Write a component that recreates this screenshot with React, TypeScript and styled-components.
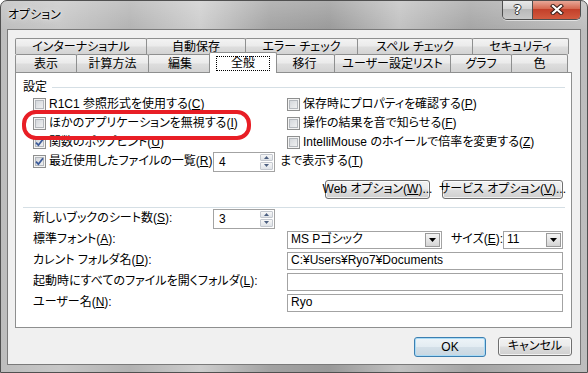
import styled, { createGlobalStyle, css } from "styled-components";

const GlobalStyle = createGlobalStyle`
  html, body {
    margin: 0;
    padding: 0;
    background: #ffffff;
  }
  body {
    font-family: "Liberation Sans", "Noto Sans CJK JP", sans-serif;
    font-size: 12px;
    line-height: 15px;
    color: #000;
    font-feature-settings: "palt" 1;
  }
`;

const backTabs = [
  { label: "インターナショナル", w: 131 },
  { label: "自動保存", w: 99 },
  { label: "エラー チェック", w: 112 },
  { label: "スペル チェック", w: 115 },
  { label: "セキュリティ", w: 96 },
];

const frontTabs = [
  { label: "表示", w: 61 },
  { label: "計算方法", w: 72 },
  { label: "編集", w: 63 },
  { label: "全般", w: 64, active: true },
  { label: "移行", w: 60 },
  { label: "ユーザー設定リスト", w: 116 },
  { label: "グラフ", w: 61 },
  { label: "色", w: 56 },
];

function Acc({ text, k, tail = "" }: { text: string; k: string; tail?: string }) {
  return (
    <>
      {text}(<Key>{k}</Key>){tail}
    </>
  );
}

function Check({ on, children }: { on?: boolean; children: React.ReactNode }) {
  return (
    <CheckRow>
      <CheckBox>
        {on ? (
          <svg width="9" height="9" viewBox="0 0 9 9">
            <polyline points="1,4.6 3.4,7.2 8,1.2" fill="none" stroke="#3b5a99" strokeWidth="1.8" />
          </svg>
        ) : null}
      </CheckBox>
      <span>{children}</span>
    </CheckRow>
  );
}

function SpinBox({ value }: { value: string }) {
  return (
    <Spin>
      <SpinValue>{value}</SpinValue>
      <SpinButtons>
        <SpinHalf>
          <svg width="5" height="3" viewBox="0 0 5 3">
            <polygon points="0,3 2.5,0 5,3" fill="#4c5f80" />
          </svg>
        </SpinHalf>
        <SpinHalf>
          <svg width="5" height="3" viewBox="0 0 5 3">
            <polygon points="0,0 2.5,3 5,0" fill="#4c5f80" />
          </svg>
        </SpinHalf>
      </SpinButtons>
    </Spin>
  );
}

function Combo({ value, width }: { value: string; width: number }) {
  return (
    <ComboBox $w={width}>
      <FieldText>{value}</FieldText>
      <ComboArrow>
        <svg width="7" height="4" viewBox="0 0 7 4">
          <polygon points="0,0 7,0 3.5,4" fill="#000" />
        </svg>
      </ComboArrow>
    </ComboBox>
  );
}

export default function App() {
  return (
    <>
      <GlobalStyle />
      <Window>
        <TitleBar>
          <Title>オプション</Title>
          <Controls>
            <HelpButton>?</HelpButton>
            <CloseButton>
              <svg width="14" height="11" viewBox="0 0 14 11">
                <path d="M3 2 L11 9 M11 2 L3 9" stroke="#3a1e18" strokeWidth="4.2" strokeLinecap="square" />
                <path d="M3 2 L11 9 M11 2 L3 9" stroke="#ffffff" strokeWidth="2.2" strokeLinecap="square" />
              </svg>
            </CloseButton>
          </Controls>
        </TitleBar>

        <Client>
          <Tabs>
            <TabRow $h={16}>
              {backTabs.map((t) => (
                <Tab key={t.label} $w={t.w}>
                  {t.label}
                </Tab>
              ))}
            </TabRow>
            <TabRow $h={18}>
              {frontTabs.map((t) => (
                <Tab key={t.label} $w={t.w} $active={t.active}>
                  {t.active ? <Focus>{t.label}</Focus> : t.label}
                </Tab>
              ))}
            </TabRow>
          </Tabs>

          <Panel>
            <GroupHead>
              <span>設定</span>
              <Rule />
            </GroupHead>

            <CheckGrid>
              <Check>
                <Acc text="R1C1 参照形式を使用する" k="C" />
              </Check>
              <Check>
                <Acc text="保存時にプロパティを確認する" k="P" />
              </Check>
              <Check>
                <Acc text="ほかのアプリケーションを無視する" k="I" />
              </Check>
              <Check>
                <Acc text="操作の結果を音で知らせる" k="F" />
              </Check>
              <Check on>
                <Acc text="関数のポップヒント" k="U" />
              </Check>
              <Check>
                <Acc text="IntelliMouse のホイールで倍率を変更する" k="Z" />
              </Check>
              <RecentRow>
                <RecentLabel>
                  <Check on>
                    <Acc text="最近使用したファイルの一覧" k="R" tail=":" />
                  </Check>
                </RecentLabel>
                <SpinBox value="4" />
                <After>
                  <Acc text="まで表示する" k="T" />
                </After>
              </RecentRow>
            </CheckGrid>

            <ButtonRow>
              <PushButton $w={105}>
                <Acc text="Web オプション" k="W" tail="..." />
              </PushButton>
              <PushButton $w={121}>
                <Acc text="サービス オプション" k="V" tail="..." />
              </PushButton>
            </ButtonRow>

            <Separator />

            <Form>
              <FormRow>
                <FieldLabel $w={180}>
                  <Acc text="新しいブックのシート数" k="S" tail=":" />
                </FieldLabel>
                <SpinBox value="3" />
              </FormRow>
              <FormRow>
                <FieldLabel $w={254}>
                  <Acc text="標準フォント" k="A" tail=":" />
                </FieldLabel>
                <Combo value="MS Pゴシック" width={155} />
                <SizeLabel>
                  <Acc text="サイズ" k="E" tail=":" />
                </SizeLabel>
                <Combo value="11" width={60} />
              </FormRow>
              <FormRow>
                <FieldLabel $w={254}>
                  <Acc text="カレント フォルダ名" k="D" tail=":" />
                </FieldLabel>
                <TextBox>
                  <FieldText>C:¥Users¥Ryo7¥Documents</FieldText>
                </TextBox>
              </FormRow>
              <FormRow>
                <FieldLabel $w={254}>
                  <Acc text="起動時にすべてのファイルを開くフォルダ" k="L" tail=":" />
                </FieldLabel>
                <TextBox />
              </FormRow>
              <FormRow>
                <FieldLabel $w={254}>
                  <Acc text="ユーザー名" k="N" tail=":" />
                </FieldLabel>
                <TextBox>
                  <FieldText>Ryo</FieldText>
                </TextBox>
              </FormRow>
            </Form>

            <Highlight />
          </Panel>

          <Footer>
            <PushButton $w={72} $default>
              OK
            </PushButton>
            <PushButton $w={74}>キャンセル</PushButton>
          </Footer>
        </Client>
      </Window>
    </>
  );
}

const Window = styled.div`
  width: 588px;
  height: 373px;
  box-sizing: border-box;
  display: flex;
  flex-direction: column;
  border: 1px solid #505050;
  border-radius: 7px 7px 0 0;
  overflow: hidden;
  background: linear-gradient(180deg, rgba(255, 255, 255, 0.22), rgba(255, 255, 255, 0) 30px),
    linear-gradient(
      90deg,
      #bdbdbd 0%,
      #c7c7c7 10%,
      #b2b2b2 22%,
      #cdcdcd 34%,
      #a2a2a2 46%,
      #999999 56%,
      #c1c1c1 68%,
      #a4a4a4 80%,
      #b1b1b1 90%,
      #bebebe 100%
    );
`;

const TitleBar = styled.div`
  height: 28px;
  display: flex;
  align-items: center;
`;

const Title = styled.span`
  margin-left: 7px;
  font-size: 12px;
  text-shadow: 0 0 6px rgba(255, 255, 255, 0.9), 0 0 2px rgba(255, 255, 255, 0.8);
`;

const Controls = styled.div`
  display: flex;
  align-self: flex-start;
  height: 19px;
  margin: -1px 6px 0 auto;
  border: 1px solid #4e4e4e;
  border-top: none;
  border-radius: 0 0 5px 5px;
  overflow: hidden;
  box-shadow: 0 1px 0 rgba(255, 255, 255, 0.55);
`;

const HelpButton = styled.div`
  width: 29px;
  display: flex;
  align-items: center;
  justify-content: center;
  border-right: 1px solid #4e4e4e;
  background: linear-gradient(180deg, #ececec 0%, #d4d4d4 45%, #b9b9b9 50%, #c9c9c9 100%);
  color: #fff;
  font-family: "DejaVu Sans", sans-serif;
  font-weight: bold;
  font-size: 13px;
  text-shadow: -1px 0 #333, 1px 0 #333, 0 -1px #333, 0 1px #333;
`;

const CloseButton = styled.div`
  width: 47px;
  display: flex;
  align-items: center;
  justify-content: center;
  background: linear-gradient(180deg, #eab0a1 0%, #d66a52 45%, #c3402a 50%, #d25a3f 100%);
`;

const Client = styled.div`
  flex: 1;
  margin: 0 6px 7px;
  border: 1px solid #7a7a7a;
  background: #f0f0f0;
  padding: 8px 8px 7px 7px;
  display: flex;
  flex-direction: column;
`;

const Tabs = styled.div`
  display: flex;
  flex-direction: column;
`;

const TabRow = styled.div<{ $h: number }>`
  display: flex;
  height: ${({ $h }) => $h}px;
`;

const Tab = styled.div<{ $w: number; $active?: boolean }>`
  box-sizing: border-box;
  width: ${({ $w }) => $w + 1}px;
  margin-right: -1px;
  display: flex;
  align-items: center;
  justify-content: center;
  border: 1px solid #8e8f8f;
  border-bottom: none;
  border-radius: 2px 2px 0 0;
  background: linear-gradient(180deg, #f3f3f3 0%, #ebebeb 45%, #dddddd 55%, #d3d3d3 100%);
  white-space: nowrap;
  line-height: 14px;

  ${({ $active, $w }) =>
    $active &&
    css`
      position: relative;
      z-index: 2;
      width: ${$w + 4}px;
      margin: -2px -3px -1px -2px;
      background: #ffffff;
    `}
`;

const Focus = styled.span`
  padding: 0 14px;
  line-height: 13px;
  outline: 1px dotted #000;
`;

const Panel = styled.div`
  position: relative;
  z-index: 1;
  box-sizing: border-box;
  height: 256px;
  border: 1px solid #8e8f8f;
  background: #ffffff;
  padding: 6px 6px 0 7px;
  display: flex;
  flex-direction: column;
`;

const GroupHead = styled.div`
  display: flex;
  align-items: center;
  gap: 5px;
  height: 16px;
`;

const Rule = styled.div`
  flex: 1;
  height: 1px;
  background: #d5dfe5;
`;

const CheckGrid = styled.div`
  display: grid;
  grid-template-columns: 254px 1fr;
  grid-auto-rows: 19px;
  padding-left: 10px;
`;

const CheckRow = styled.label`
  display: flex;
  align-items: center;
  gap: 3px;
  white-space: nowrap;
`;

const CheckBox = styled.span`
  width: 13px;
  height: 13px;
  box-sizing: border-box;
  flex-shrink: 0;
  display: flex;
  align-items: center;
  justify-content: center;
  border: 1px solid #8e8f8f;
  background: linear-gradient(135deg, #cdd1d6 0%, #f6f6f6 100%);
  box-shadow: inset 0 0 0 1px #f4f4f4, inset 0 0 0 2px #b4b8bd;
`;

const Key = styled.span`
  text-decoration: underline;
`;

const RecentRow = styled.div`
  grid-column: 1 / -1;
  display: flex;
  align-items: center;
`;

const RecentLabel = styled.div`
  width: 180px;
`;

const After = styled.span`
  margin-left: 5px;
  white-space: nowrap;
`;

const Spin = styled.div`
  width: 62px;
  height: 20px;
  box-sizing: border-box;
  display: flex;
  border: 1px solid #a3a3a3;
  background: #fff;
`;

const SpinValue = styled.span`
  flex: 1;
  padding-left: 5px;
  line-height: 18px;
`;

const SpinButtons = styled.div`
  width: 13px;
  margin: 1px;
  display: flex;
  flex-direction: column;
  gap: 1px;
`;

const SpinHalf = styled.div`
  flex: 1;
  display: flex;
  align-items: center;
  justify-content: center;
  border: 1px solid #c4c8cf;
  border-radius: 1px;
  background: linear-gradient(180deg, #f7f7f7, #dfe3e8);
`;

const ButtonRow = styled.div`
  display: flex;
  justify-content: flex-end;
  gap: 12px;
  margin-top: 9px;
  padding-right: 2px;
`;

const PushButton = styled.div<{ $w: number; $default?: boolean }>`
  width: ${({ $w }) => $w}px;
  height: 19px;
  box-sizing: border-box;
  display: flex;
  align-items: center;
  justify-content: center;
  white-space: nowrap;
  border: 1px solid #707070;
  border-radius: 3px;
  background: linear-gradient(180deg, #f2f2f2 0%, #ebebeb 48%, #dddddd 52%, #cfcfcf 100%);
  box-shadow: inset 0 0 0 1px rgba(255, 255, 255, 0.75);

  ${({ $default }) =>
    $default &&
    css`
      height: 20px;
      border-color: #3c7fb1;
      box-shadow: inset 0 0 0 1px #a9dbf6;
      background: linear-gradient(180deg, #eef4f8 0%, #e3ecf2 48%, #d3dfe8 52%, #c9d7e1 100%);
    `}
`;

const Separator = styled.div`
  height: 1px;
  margin-top: 8px;
  background: #d5dfe5;
`;

const Form = styled.div`
  display: flex;
  flex-direction: column;
  padding-left: 10px;
  padding-right: 2px;
`;

const FormRow = styled.div`
  display: flex;
  align-items: center;
  height: 21px;
`;

const FieldLabel = styled.span<{ $w: number }>`
  width: ${({ $w }) => $w}px;
  flex-shrink: 0;
  white-space: nowrap;
`;

const SizeLabel = styled.span`
  width: 52px;
  margin-left: 9px;
  white-space: nowrap;
`;

const ComboBox = styled.div<{ $w: number }>`
  width: ${({ $w }) => $w}px;
  height: 18px;
  box-sizing: border-box;
  display: flex;
  align-items: center;
  border: 1px solid #a3a3a3;
  background: #fff;
`;

const ComboArrow = styled.div`
  width: 15px;
  height: 14px;
  margin-right: 1px;
  box-sizing: border-box;
  display: flex;
  align-items: center;
  justify-content: center;
  border: 1px solid #9a9a9a;
  background: linear-gradient(180deg, #f4f4f4 0%, #e6e6e6 50%, #d4d4d4 100%);
`;

const FieldText = styled.span`
  flex: 1;
  padding-left: 3px;
  white-space: nowrap;
`;

const TextBox = styled.div`
  width: 276px;
  height: 18px;
  box-sizing: border-box;
  display: flex;
  align-items: center;
  border: 1px solid #a3a3a3;
  background: #fff;
`;

const Footer = styled.div`
  display: flex;
  justify-content: flex-end;
  gap: 12px;
  margin-top: 9px;
`;

const Highlight = styled.div`
  position: absolute;
  left: 6px;
  top: 37px;
  width: 229px;
  height: 30px;
  box-sizing: border-box;
  border: 4px solid #e81e25;
  border-radius: 14px;
  pointer-events: none;
`;
